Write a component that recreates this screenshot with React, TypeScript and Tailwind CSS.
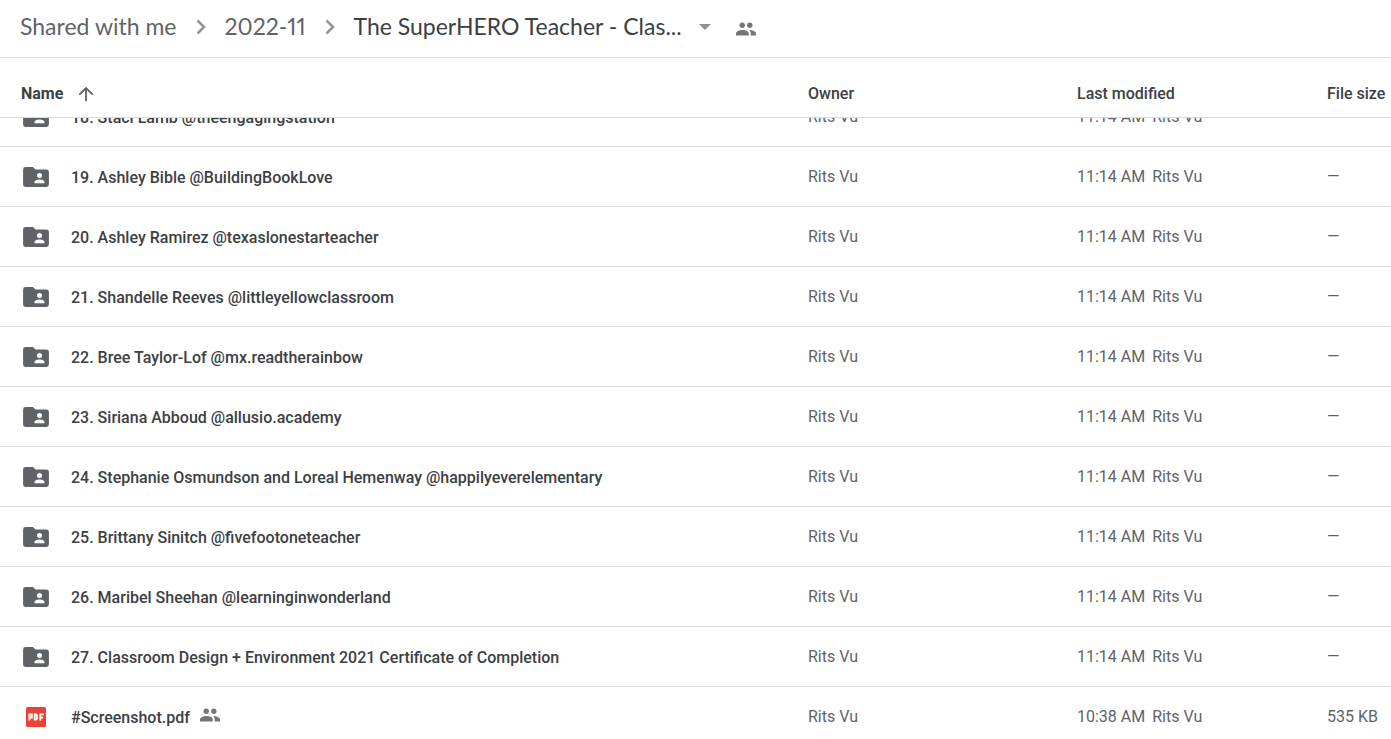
import React from 'react';

interface DriveItem {
  name: string;
  kind: 'folder' | 'pdf';
  modified: string;
  size: string;
  shared?: boolean;
}

const OWNER = 'Rits Vu';

const folder = (name: string): DriveItem => ({
  name,
  kind: 'folder',
  modified: '11:14 AM',
  size: '—',
});

// scrolled halfway under the header
const PARTIAL_ITEM: DriveItem = { ...folder('18. Staci Lamb @theengagingstation'), size: '' };

const ITEMS: DriveItem[] = [
  folder('19. Ashley Bible @BuildingBookLove'),
  folder('20. Ashley Ramirez @texaslonestarteacher'),
  folder('21. Shandelle Reeves @littleyellowclassroom'),
  folder('22. Bree Taylor-Lof @mx.readtherainbow'),
  folder('23. Siriana Abboud @allusio.academy'),
  folder('24. Stephanie Osmundson and Loreal Hemenway @happilyeverelementary'),
  folder('25. Brittany Sinitch @fivefootoneteacher'),
  folder('26. Maribel Sheehan @learninginwonderland'),
  folder('27. Classroom Design + Environment 2021 Certificate of Completion'),
  { name: '#Screenshot.pdf', kind: 'pdf', modified: '10:38 AM', size: '535 KB', shared: true },
];

const PeopleIcon: React.FC<{ className?: string }> = ({ className }) => (
  <svg viewBox="0 0 20 14" className={`h-[14px] w-5 shrink-0 fill-current ${className ?? ''}`} aria-hidden="true">
    <circle cx="6.2" cy="3.2" r="2.7" />
    <path d="M6.4 8C4.1 8 0 9.1 0 11.4V13.6h12.8v-2.2C12.8 9.1 8.7 8 6.4 8z" />
    <circle cx="13.8" cy="3.2" r="2.7" />
    <path d="M13.2 8.1c.9.9 1.5 1.900 1.500 3.300v2.200H20v-2.200c0-2-3.900-3.200-6.800-3.300z" />
  </svg>
);

const FolderIcon = () => (
  <svg viewBox="0 0 26 20" className="h-5 w-[26px] fill-[#5f6368]" aria-hidden="true">
    <path d="M2.500 0h7.500l2.500 2.400h11A2.400 2.400 0 0 1 25.900 4.800v12.800a2.400 2.400 0 0 1-2.400 2.400h-21A2.400 2.400 0 0 1 .1 17.600V2.400A2.400 2.400 0 0 1 2.500 0z" />
    <circle cx="16.500" cy="8.600" r="2.500" fill="#fff" />
    <path d="M11.500 16.200v-1.300c0-1.700 3.300-2.500 5-2.500s5 .8 5 2.500v1.300z" fill="#fff" />
  </svg>
);

const PdfIcon = () => (
  <svg viewBox="0 0 20 20" className="mx-[3px] h-5 w-5" aria-hidden="true">
    <rect width="20" height="20" rx="1.500" fill="#ea4335" />
    <g fill="none" stroke="#fff" strokeWidth="1.900">
      <path d="M3.400 13.600V7.400h2.400v3.200H3.400" />
      <path d="M8.700 7.400h1.400l.9.900v3.400l-.9.900H8.700z" />
      <path d="M14.300 13.600V7.400h3.500M14.300 10.600h2.800" />
    </g>
  </svg>
);

const Chevron = () => (
  <svg viewBox="0 0 10 16" className="mx-[19px] h-4 w-[10px] shrink-0" aria-hidden="true">
    <path d="M1.500 1.500L8 8l-6.500 6.500" fill="none" stroke="#949699" strokeWidth="2.600" />
  </svg>
);

const Cell: React.FC<{ partial?: boolean; className?: string; children: React.ReactNode }> = ({
  partial,
  className,
  children,
}) => (
  <div className={partial ? 'flex h-7 items-end overflow-hidden' : 'flex h-[59px] items-center'}>
    <div className={`flex h-[59px] shrink-0 items-center whitespace-nowrap ${className ?? ''}`}>{children}</div>
  </div>
);

const ItemRow: React.FC<{ item: DriveItem; partial?: boolean }> = ({ item, partial }) => (
  <tr className="border-b border-[#dadce0] last:border-b-0">
    <td>
      <Cell partial={partial} className="pt-px pl-[23px]">
        {item.kind === 'folder' ? <FolderIcon /> : <PdfIcon />}
        <span className="ml-[22px] pt-[2px] font-medium text-[#3c4043]">{item.name}</span>
        {item.shared && <PeopleIcon className="mb-[3px] ml-[10px] text-[#757575]" />}
      </Cell>
    </td>
    <td>
      <Cell partial={partial} className="pt-[2px]">{OWNER}</Cell>
    </td>
    <td>
      <Cell partial={partial} className="gap-[7px] pt-[2px]">
        <span>{item.modified}</span>
        <span>{OWNER}</span>
      </Cell>
    </td>
    <td>
      <Cell partial={partial} className="pt-[2px]">{item.size}</Cell>
    </td>
  </tr>
);

const App = () => {
  return (
    <div className="h-screen overflow-hidden bg-white font-[Roboto,sans-serif] text-base text-[#5f6368]">
      <nav
        aria-label="Breadcrumb"
        className="flex h-[58px] items-center border-b border-[#dadce0] pb-1 pl-5 font-[Lato,sans-serif] text-[23px] whitespace-nowrap proportional-nums"
      >
        <a href="#shared">Shared with me</a>
        <Chevron />
        <a href="#2022-11">2022-11</a>
        <Chevron />
        <button type="button" className="flex items-center gap-[17px] text-[#3c4043]">
          <span>The SuperHERO Teacher - Clas...</span>
          <svg viewBox="0 0 12 6" className="h-[6px] w-3 fill-[#8f9194]" aria-hidden="true">
            <path d="M0 0h12L6 6z" />
          </svg>
        </button>
        <button type="button" aria-label="Shared" className="mt-1 ml-[25px] text-[#757575]">
          <PeopleIcon />
        </button>
      </nav>

      <table className="w-full table-fixed border-collapse text-left">
        <thead className="text-[#3c4043]">
          <tr className="h-[59px] border-b border-[#dadce0]">
            <th className="pt-[14px] pl-[21px] font-bold">
              <button type="button" className="flex items-center gap-3">
                Name
                <svg viewBox="0 0 24 24" className="h-[22px] w-[22px] fill-[#5f6368]" aria-hidden="true">
                  <path d="M4 12l1.410 1.410L11 7.830V20h2V7.830l5.580 5.590L20 12l-8-8-8 8z" />
                </svg>
              </button>
            </th>
            <th className="w-[269px] pt-[14px] font-medium">Owner</th>
            <th className="w-[250px] pt-[14px] font-medium">Last modified</th>
            <th className="w-16 pt-[14px] font-medium whitespace-nowrap">File size</th>
          </tr>
        </thead>
        <tbody>
          <ItemRow item={PARTIAL_ITEM} partial />
          {ITEMS.map((item) => (
            <ItemRow key={item.name} item={item} />
          ))}
        </tbody>
      </table>
    </div>
  );
};

export default App;
